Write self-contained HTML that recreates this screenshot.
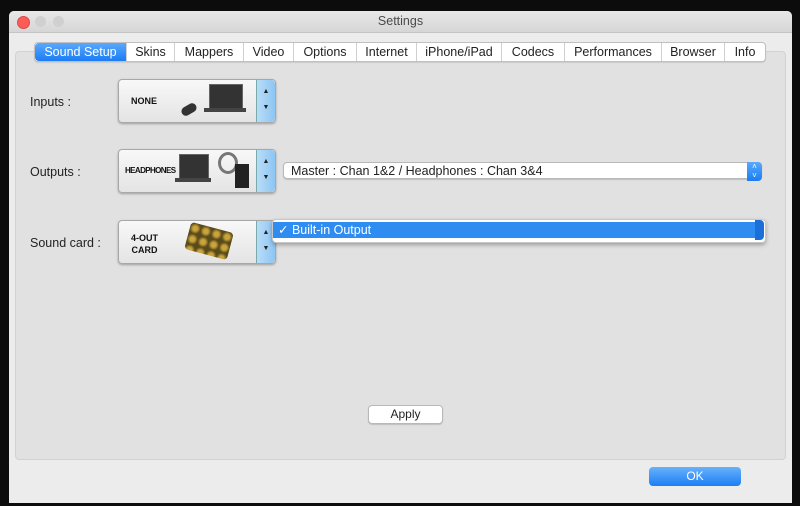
<!DOCTYPE html><html><head><style>
body{margin:0;width:800px;height:506px;background:#0c0c0c;position:relative;overflow:hidden;font-family:"Liberation Sans",sans-serif;font-size:12px;color:#222}
.a{position:absolute}
.win{left:9px;top:11px;width:783px;height:492px;background:#ececec;border-radius:5px 5px 0 0}
.title{left:0;top:0;width:783px;height:21px;background:linear-gradient(#e8e8e8,#d6d6d6);border-bottom:1px solid #c4c4c4;border-radius:5px 5px 0 0;text-align:center;line-height:21px;color:#4a4a4a;font-size:12.5px}
.dot{width:11px;height:11px;border-radius:50%;top:5px}
.panel{left:6px;top:40px;width:769px;height:407px;background:#e1e1e1;border:1px solid #d2d2d2;border-radius:4px}
.tabs{left:25px;top:31px;height:18px;display:flex;background:#fff;border:1px solid #c0c0c0;border-radius:4px;box-shadow:0 1px 1px rgba(0,0,0,.1)}
.tabs div{border-left:1px solid #d0d0d0;line-height:18px;text-align:center;font-size:12.5px}
.tabs div.s{background:linear-gradient(#5aa9fb,#1a7cf5);color:#fff;border:0;border-radius:4px 0 0 4px}
.lbl{font-size:12.5px;color:#222}
.sel{width:156px;height:42px;background:linear-gradient(#f8f8f8,#e4e4e4);border:1px solid #a8a8a8;border-radius:4px;box-shadow:0 1px 2px rgba(0,0,0,.3)}
.sel .arr{position:absolute;right:0;top:0;width:18px;height:42px;background:linear-gradient(90deg,#b9dcf7,#8cc6f3);border-left:1px solid #7aa;border-radius:0 4px 4px 0;font-size:7px;text-align:center}
.sel b{position:absolute;font-family:"Liberation Sans",sans-serif;font-size:9px;font-weight:900;color:#111}
.btn{background:#fff;border:1px solid #b8b8b8;border-radius:4px;text-align:center;box-shadow:0 1px 1px rgba(0,0,0,.15)}
</style></head><body>
<div class="a win">
<div class="a title">Settings</div>
<div class="a dot" style="left:8px;background:#fc5b57;border:.5px solid #de4a46"></div>
<div class="a dot" style="left:26px;background:#d0d0d0"></div>
<div class="a dot" style="left:44px;background:#d0d0d0"></div>
<div class="a panel"></div>
<div class="a tabs">
<div class="s" style="width:91px">Sound Setup</div><div style="width:47px">Skins</div><div style="width:68px">Mappers</div><div style="width:49px">Video</div><div style="width:62px">Options</div><div style="width:59px">Internet</div><div style="width:84px">iPhone/iPad</div><div style="width:62px">Codecs</div><div style="width:96px">Performances</div><div style="width:62px">Browser</div><div style="width:40px">Info</div>
</div>
<div class="a lbl" style="left:21px;top:84px">Inputs :</div>
<div class="a lbl" style="left:21px;top:154px">Outputs :</div>
<div class="a lbl" style="left:21px;top:225px">Sound card :</div>
<div class="a sel" style="left:109px;top:68px"><b style="left:12px;top:16px">NONE</b>
<div class="a" style="left:90px;top:4px;width:32px;height:24px;background:#333;border:1px solid #666"></div><div class="a" style="left:85px;top:28px;width:42px;height:4px;background:#444"></div><div class="a" style="left:62px;top:25px;width:16px;height:9px;background:#333;border-radius:5px;transform:rotate(-30deg)"></div>
<div class="arr"><div style="margin-top:8px">▲</div><div style="margin-top:9px">▼</div></div></div>
<div class="a sel" style="left:109px;top:138px"><b style="left:6px;top:16px;font-size:8px;letter-spacing:-.6px">HEADPHONES</b>
<div class="a" style="left:60px;top:4px;width:28px;height:24px;background:#333;border:1px solid #666"></div><div class="a" style="left:56px;top:28px;width:36px;height:4px;background:#444"></div><div class="a" style="left:99px;top:2px;width:14px;height:16px;border:3px solid #777;border-radius:50%"></div><div class="a" style="left:116px;top:14px;width:14px;height:24px;background:#222"></div>
<div class="arr"><div style="margin-top:8px">▲</div><div style="margin-top:9px">▼</div></div></div>
<div class="a sel" style="left:109px;top:209px"><b style="left:12px;top:11px;text-align:center;line-height:12px">4-OUT<br>CARD</b>
<div class="a" style="left:68px;top:6px;width:44px;height:28px;background:radial-gradient(circle,#c9a43a 30%,#5a4a1a 70%);background-size:11px 11px;border-radius:4px;transform:rotate(15deg)"></div>
<div class="arr"><div style="margin-top:8px">▲</div><div style="margin-top:9px">▼</div></div></div>
<div class="a btn" style="left:274px;top:151px;width:479px;height:17px;line-height:17px;text-align:left;padding-left:7px;box-sizing:border-box;font-size:12.5px">Master : Chan 1&amp;2 / Headphones : Chan 3&amp;4
<div class="a" style="right:-1px;top:-1px;width:15px;height:19px;background:linear-gradient(#5aa9fb,#1a7cf5);border-radius:0 4px 4px 0;color:#fff;font-size:8px;line-height:9px;text-align:center">˄<br>˅</div></div>
<div class="a" style="left:263px;top:208px;width:492px;height:22px;background:#fff;border:1px solid #c8c8c8;border-radius:4px;box-shadow:0 2px 4px rgba(0,0,0,.3)"></div>
<div class="a" style="left:264px;top:211px;width:486px;height:16px;background:#2f8cf1;color:#fff;line-height:16px;padding-left:5px;box-sizing:border-box;font-size:12.5px">✓ Built-in Output</div>
<div class="a" style="left:746px;top:209px;width:9px;height:20px;background:#1a6fd8;border-radius:0 4px 4px 0"></div>
<div class="a btn" style="left:359px;top:394px;width:73px;height:17px;line-height:17px">Apply</div>
<div class="a" style="left:640px;top:456px;width:92px;height:19px;line-height:19px;text-align:center;color:#fff;background:linear-gradient(#69b1fb,#1b7ef5);border-radius:4px">OK</div>
</div>
</body></html>
